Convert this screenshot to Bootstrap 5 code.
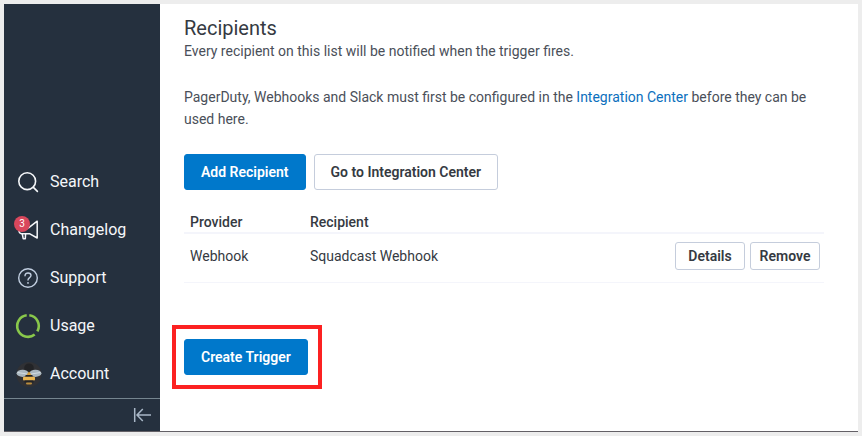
<!DOCTYPE html>
<html lang="en">
<head>
<meta charset="utf-8">
<meta name="viewport" content="width=device-width, initial-scale=1">
<title>Create Trigger</title>
<link href="https://cdn.jsdelivr.net/npm/bootstrap@5.3.0/dist/css/bootstrap.min.css" rel="stylesheet">
<style>
  body { background: #ededed; font-family: Roboto, "Liberation Sans", sans-serif; font-size: 14px; line-height: 22px; color: #4a4f59; }
  .app { height: 436px; padding: 4px; }
  .app-window { height: 428px; border-bottom: 1px solid #636066; }
  .side { width: 156px; background: #25303e; }
  .side .nav-link { height: 48px; padding: 0 0 0 12px; gap: 10px; color: #f5f7fa; font-size: 16px; }
  .side-icon { width: 24px; height: 24px; }
  .side-icon svg { display: block; overflow: visible; }
  .count-badge { left: -2px; top: -2px; width: 16px; height: 16px; line-height: 16px; font-size: 10px; background: #d9475c; color: #fff; }
  .side-foot { height: 33px; border-top: 1px solid #75858f; padding-right: 8px; }
  .pane { padding: 12px 34px 0 24px; }
  .pane h1 { font-size: 20px; line-height: 24px; font-weight: 400; color: #353a42; margin: 0; }
  .pane a.text-link { color: #0b6fbd; }
  .pane .btn { font-size: 14px; font-weight: 600; line-height: 20px; border-radius: 3px; height: 36px; padding: 7px 16px; color: #353a42; border-color: #c5cddc; }
  .pane .btn-primary { background: #0078cb; border-color: #0078cb; color: #fff; }
  .actions { margin-top: 24px; }
  .pane .btn.btn-row { height: 28px; width: 70px; padding: 3px 0; }
  .recipients { margin: 20px 0 0; color: #353a42; --bs-table-color: #40454d; }
  .recipients th, .recipients td { padding: 0 6px; border: 0; vertical-align: middle; }
  .recipients th { height: 23px; padding-top: 3px; line-height: 19px; font-weight: 500; color: #353a42; }
  .recipients thead tr { border-bottom: 2px solid #f4f5fb; }
  .recipients tbody tr { border-bottom: 1px solid #f4f5fb; }
  .recipients td { height: 49px; padding-bottom: 4px; }
  .recipients td:last-child { padding-right: 4px; }
  .row-actions { gap: 5px; }
  .col-provider { width: 120px; }
  .highlight { width: 150px; height: 64px; border: 4px solid #fc2121; margin: 42px 0 0 -12px; }
</style>
<script src="https://cdn.jsdelivr.net/npm/bootstrap@5.3.0/dist/js/bootstrap.bundle.min.js" defer></script>
</head>
<body>
<div class="app overflow-hidden">
  <div class="app-window d-flex bg-white">
    <aside class="side d-flex flex-column justify-content-end flex-shrink-0">
      <nav class="nav flex-column">
        <a class="nav-link d-flex align-items-center" href="#">
          <span class="side-icon"><svg width="24" height="24" fill="none" stroke="#f5f7fa" stroke-width="1.6" stroke-linecap="round"><circle cx="11.2" cy="11.2" r="8.4"/><path d="M17.4 17.4 21.4 21.4"/></svg></span>
          <span>Search</span>
        </a>
        <a class="nav-link d-flex align-items-center" href="#">
          <span class="side-icon position-relative"><svg width="24" height="24" fill="none" stroke="#f5f7fa" stroke-width="1.5" stroke-linejoin="round" stroke-linecap="round"><path d="M21.2 3.2V20L13.4 15.7H5.5A3 3 0 0 1 3 13V9.8H12.5Z"/><path d="M6.300 16 7.200 20.700H9.300L9.600 16"/></svg><span class="count-badge position-absolute rounded-circle text-center">3</span></span>
          <span>Changelog</span>
        </a>
        <a class="nav-link d-flex align-items-center" href="#">
          <span class="side-icon"><svg width="24" height="24" fill="none" stroke="#c1cee0" stroke-width="1.4" stroke-linecap="round"><circle cx="12" cy="12" r="9.3"/><path d="M9 9.700C9 6 15 6.200 15 9.500C15 11.700 12 11.500 12 14"/><circle cx="12" cy="16.9" r=".9" fill="#c1cee0" stroke="none"/></svg></span>
          <span>Support</span>
        </a>
        <a class="nav-link d-flex align-items-center" href="#">
          <span class="side-icon"><svg width="24" height="24" fill="none" stroke="#89c84b" stroke-width="2.6"><path d="M13.300 1.300A10.800 10.800 0 0 1 21.400 17.300M18.700 20.500A10.800 10.800 0 1 1 10.700 1.300"/></svg></span>
          <span>Usage</span>
        </a>
        <a class="nav-link d-flex align-items-center" href="#">
          <span class="side-icon"><svg width="26" height="26"><circle cx="13" cy="12.5" r="12.6" fill="#303135"/><ellipse cx="13" cy="6" rx="4.8" ry="4.5" fill="#222326"/><ellipse cx="6.6" cy="11.3" rx="6" ry="3.6" fill="#aab7c0"/><ellipse cx="19.4" cy="11.3" rx="6" ry="3.6" fill="#aab7c0"/><path d="M1.500 10.500 11 12M24.500 10.500 15 12" stroke="#d3dce2"/><path d="M13 9.500 15.500 13H10.500Z" fill="#d7a13c"/><rect x="9.5" y="13" width="7" height="2" fill="#222326"/><rect x="7" y="14.8" width="12" height="3.6" rx="1" fill="#e9b551"/><rect x="8.5" y="18.4" width="9" height="2.2" fill="#222326"/><rect x="10" y="20.6" width="6" height="1.8" rx=".8" fill="#b88b3d"/></svg></span>
          <span>Account</span>
        </a>
      </nav>
      <div class="side-foot d-flex align-items-center justify-content-end">
        <svg width="20" height="16" fill="none" stroke="#a9b7c7" stroke-width="1.5"><path d="M2.700 1V15M19 8H5M10.800 2 5 8 10.800 14"/></svg>
      </div>
    </aside>
    <main class="pane flex-grow-1">
      <h1>Recipients</h1>
      <p class="mb-0">Every recipient on this list will be notified when the trigger fires.</p>
      <p class="mb-0 mt-4">PagerDuty, Webhooks and Slack must first be configured in the <a class="text-link text-decoration-none" href="#">Integration Center</a> before they can be used here.</p>
      <div class="actions d-flex gap-2">
        <button type="button" class="btn btn-primary">Add Recipient</button>
        <button type="button" class="btn bg-white">Go to Integration Center</button>
      </div>
      <table class="table recipients">
        <thead><tr><th class="col-provider">Provider</th><th>Recipient</th><th></th></tr></thead>
        <tbody>
          <tr>
            <td>Webhook</td>
            <td>Squadcast Webhook</td>
            <td><div class="d-flex justify-content-end row-actions"><button type="button" class="btn btn-row bg-white">Details</button><button type="button" class="btn btn-row bg-white">Remove</button></div></td>
          </tr>
        </tbody>
      </table>
      <div class="highlight d-flex align-items-center justify-content-start ps-2">
        <button type="button" class="btn btn-primary">Create Trigger</button>
      </div>
    </main>
  </div>
</div>
</body>
</html>
